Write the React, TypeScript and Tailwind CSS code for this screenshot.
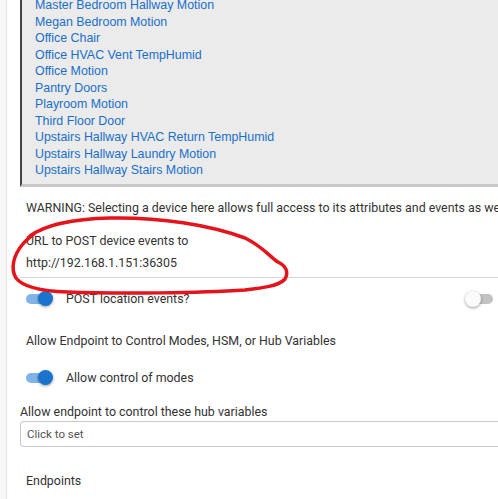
const devices = [
  "Master Bedroom Hallway Motion",
  "Megan Bedroom Motion",
  "Office Chair",
  "Office HVAC Vent TempHumid",
  "Office Motion",
  "Pantry Doors",
  "Playroom Motion",
  "Third Floor Door",
  "Upstairs Hallway HVAC Return TempHumid",
  "Upstairs Hallway Laundry Motion",
  "Upstairs Hallway Stairs Motion",
];

function Toggle({ on }: { on: boolean }) {
  return (
    <div className="relative h-[16px] w-[28px] shrink-0">
      <div
        className={
          on
            ? "absolute left-0 top-[3px] h-[10px] w-[23px] rounded-full bg-[#80b3e6]"
            : "absolute left-[5px] top-[3px] h-[10px] w-[23px] rounded-full bg-[#c2c2c2]"
        }
      />
      <div
        className={
          on
            ? "absolute left-[12px] top-0 h-[15px] w-[15px] rounded-full bg-[#1a73cc] shadow-[0_1px_3px_rgba(0,0,0,0.4)]"
            : "absolute left-0 top-0 h-[16px] w-[16px] rounded-full bg-[#fafafa] shadow-[0_1px_3px_rgba(0,0,0,0.4)]"
        }
      />
    </div>
  );
}

export default function App() {
  return (
    <div className="relative flex h-[499px] w-[498px] overflow-hidden bg-white font-['Roboto',sans-serif] text-[12.4px] leading-[16px] text-[#333]">
      <div className="w-[7px] shrink-0 border-r border-[#e4e4e4] bg-[#f7f7f7]" />
      <div className="min-w-0 flex-1 pl-[13px]">
        <div className="-mt-[3px] w-[520px] border-b-[3px] border-l-2 border-b-[#c8c8c8] border-l-[#444] bg-[#ebebeb] pb-[5px] pl-[13px] font-['Liberation_Sans',Arial,sans-serif] text-[12.4px] leading-[16.5px] text-[#1a6fc9]">
          {devices.map((d) => (
            <div key={d}>{d}</div>
          ))}
        </div>

        <div className="mt-[13px] whitespace-nowrap pl-[6px]">
          WARNING: Selecting a device here allows full access to its attributes and events as well
        </div>

        <div className="mt-[17px] pl-[6px]">URL to POST device events to</div>
        <div className="mt-[6px] w-[520px] border-b border-[#d6d6d6] pb-[6px] pl-[6px]">
          http://192.168.1.151:36305
        </div>

        <div className="mt-[13px] flex h-[16px] items-center pl-[6px]">
          <Toggle on />
          <span className="ml-[12px]">POST location events?</span>
          <div className="ml-auto mr-[5px]">
            <Toggle on={false} />
          </div>
        </div>

        <div className="mt-[26px] pl-[6px]">Allow Endpoint to Control Modes, HSM, or Hub Variables</div>

        <div className="mt-[21px] flex h-[16px] items-center pl-[6px]">
          <Toggle on />
          <span className="ml-[12px]">Allow control of modes</span>
        </div>

        <div className="mt-[18px]">Allow endpoint to control these hub variables</div>
        <div className="mt-[1px] flex h-[26px] w-[520px] items-center rounded-[3px] border border-[#c8c8c8] pl-[6px] text-[11.5px] text-[#555]">
          Click to set
        </div>

        <div className="mt-[26px] pl-[6px]">Endpoints</div>
      </div>

      <svg
        className="pointer-events-none absolute left-0 top-0"
        width="498"
        height="499"
        viewBox="0 0 498 499"
      >
        <path
          d="M30 236 C45 225 70 219 110 218 C160 217 210 225 245 238 C262 246 270 257 278 262 C286 266 289 272 285 279 C279 286 262 288 245 290 C200 293 120 294 67 292 C40 291 22 286 16 278 C10 268 14 255 22 245 C26 240 30 237 35 233"
          fill="none"
          stroke="#e3141b"
          strokeWidth="3.5"
          strokeLinecap="round"
        />
      </svg>
    </div>
  );
}
